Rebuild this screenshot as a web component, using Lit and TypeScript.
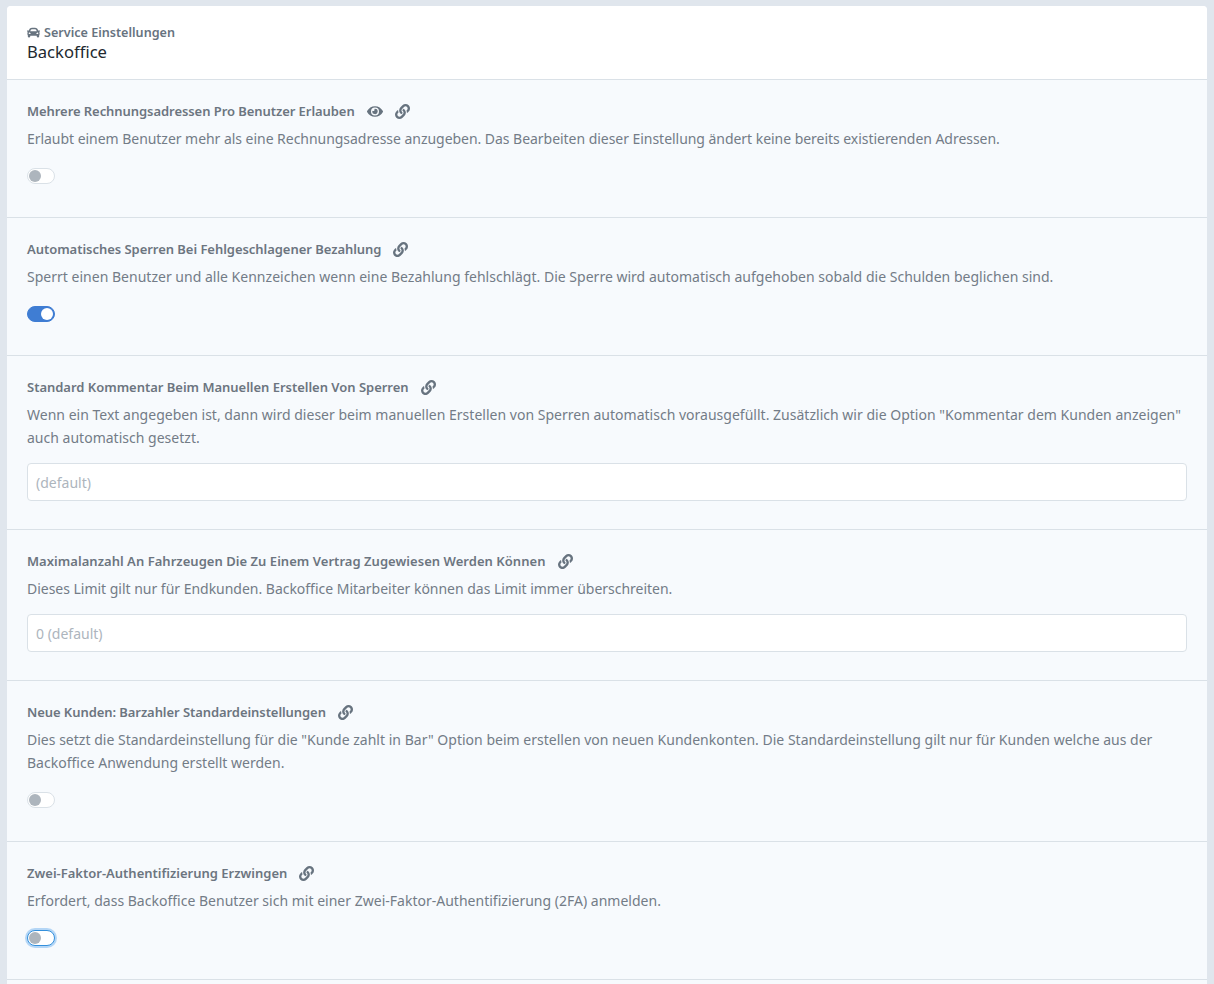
import { LitElement, html, css, svg } from "lit";
import { customElement } from "lit/decorators.js";

const LINK = svg`<path d="M326.612 185.391c59.747 59.809 58.927 155.698.36 214.59-.11.12-.24.25-.36.37l-67.2 67.2c-59.27 59.27-155.699 59.262-214.96 0-59.27-59.26-59.27-155.7 0-214.96l37.106-37.106c9.84-9.84 26.786-3.3 27.294 10.606.648 17.722 3.826 35.527 9.69 52.721 1.986 5.822.567 12.262-3.783 16.612l-13.087 13.087c-28.026 28.026-28.905 73.66-1.155 101.96 28.024 28.579 74.086 28.749 102.325.51l67.2-67.19c28.191-28.191 28.073-73.757 0-101.83-3.701-3.694-7.429-6.564-10.341-8.569a16.037 16.037 0 0 1-6.947-12.606c-.396-10.567 3.348-21.456 11.698-29.806l21.054-21.055c5.521-5.521 14.182-6.199 20.584-1.731a152.482 152.482 0 0 1 20.522 17.197zM467.547 44.449c-59.261-59.262-155.69-59.27-214.96 0l-67.2 67.2c-.12.12-.25.25-.36.37-58.566 58.892-59.387 154.781.36 214.59a152.454 152.454 0 0 0 20.521 17.196c6.402 4.468 15.064 3.789 20.584-1.731l21.054-21.055c8.35-8.35 12.094-19.239 11.698-29.806a16.037 16.037 0 0 0-6.947-12.606c-2.912-2.005-6.64-4.875-10.341-8.569-28.073-28.073-28.191-73.639 0-101.83l67.2-67.19c28.239-28.239 74.3-28.069 102.325.51 27.75 28.3 26.872 73.934-1.155 101.96l-13.087 13.087c-4.35 4.35-5.769 10.79-3.783 16.612 5.864 17.194 9.042 34.999 9.69 52.721.509 13.906 17.454 20.446 27.294 10.606l37.106-37.106c59.271-59.259 59.271-155.699.001-214.959z"/>`;
const EYE = svg`<path d="M572.52 241.4C518.29 135.59 410.93 64 288 64S57.68 135.64 3.48 241.41a32.35 32.35 0 0 0 0 29.19C57.71 376.41 165.07 448 288 448s230.32-71.64 284.52-177.41a32.35 32.35 0 0 0 0-29.19zM288 400a144 144 0 1 1 144-144 143.93 143.93 0 0 1-144 144zm0-240a95.31 95.31 0 0 0-25.31 3.79 47.85 47.85 0 0 1-66.9 66.9A95.78 95.78 0 1 0 288 160z"/>`;
const CAR = svg`<path d="M499.99 176h-59.87l-16.64-41.6C406.38 91.63 365.57 64 319.5 64h-127c-46.06 0-86.88 27.63-103.99 70.4L71.87 176H12.01C4.2 176-1.53 183.34.37 190.91l6 24C7.7 220.25 12.5 224 18.01 224h20.07C24.65 235.73 16 252.78 16 272v48c0 16.12 6.16 30.67 16 41.93V416c0 17.67 14.33 32 32 32h32c17.67 0 32-14.33 32-32v-32h256v32c0 17.67 14.33 32 32 32h32c17.67 0 32-14.33 32-32v-54.07c9.84-11.25 16-25.8 16-41.93v-48c0-19.22-8.65-36.27-22.07-48H494c5.51 0 10.31-3.75 11.64-9.09l6-24c1.89-7.57-3.84-14.91-11.65-14.91zm-352.06-17.83c7.29-18.22 24.94-30.17 44.57-30.17h127c19.63 0 37.28 11.95 44.57 30.17L384 208H128l19.93-49.83zM96 319.8c-19.2 0-32-12.76-32-31.9S76.8 256 96 256s48 28.71 48 47.85-28.8 15.95-48 15.95zm320 0c-19.2 0-48 3.19-48-15.95S396.8 256 416 256s32 12.76 32 31.9-12.8 31.9-32 31.9z"/>`;

type Item = {
  title: string;
  desc: string;
  eye?: boolean;
  toggle?: "off" | "on" | "focus";
  placeholder?: string;
  titleTrack: number;
  descTrack: number;
};

const ITEMS: Item[] = [
  { title: "Mehrere Rechnungsadressen Pro Benutzer Erlauben", eye: true, toggle: "off", titleTrack: -0.064, descTrack: -0.04,
    desc: "Erlaubt einem Benutzer mehr als eine Rechnungsadresse anzugeben. Das Bearbeiten dieser Einstellung ändert keine bereits existierenden Adressen." },
  { title: "Automatisches Sperren Bei Fehlgeschlagener Bezahlung", toggle: "on", titleTrack: -0.04, descTrack: 0.013,
    desc: "Sperrt einen Benutzer und alle Kennzeichen wenn eine Bezahlung fehlschlägt. Die Sperre wird automatisch aufgehoben sobald die Schulden beglichen sind." },
  { title: "Standard Kommentar Beim Manuellen Erstellen Von Sperren", placeholder: "(default)", titleTrack: -0.02, descTrack: 0.012,
    desc: 'Wenn ein Text angegeben ist, dann wird dieser beim manuellen Erstellen von Sperren automatisch vorausgefüllt. Zusätzlich wir die Option "Kommentar dem Kunden anzeigen" auch automatisch gesetzt.' },
  { title: "Maximalanzahl An Fahrzeugen Die Zu Einem Vertrag Zugewiesen Werden Können", placeholder: "0 (default)", titleTrack: 0.04, descTrack: -0.02,
    desc: "Dieses Limit gilt nur für Endkunden. Backoffice Mitarbeiter können das Limit immer überschreiten." },
  { title: "Neue Kunden: Barzahler Standardeinstellungen", toggle: "off", titleTrack: -0.07, descTrack: 0.012,
    desc: 'Dies setzt die Standardeinstellung für die "Kunde zahlt in Bar" Option beim erstellen von neuen Kundenkonten. Die Standardeinstellung gilt nur für Kunden welche aus der Backoffice Anwendung erstellt werden.' },
  { title: "Zwei-Faktor-Authentifizierung Erzwingen", toggle: "focus", titleTrack: 0, descTrack: 0.01,
    desc: "Erfordert, dass Backoffice Benutzer sich mit einer Zwei-Faktor-Authentifizierung (2FA) anmelden." },
];

@customElement("app-root")
export class AppRoot extends LitElement {
  static styles = css`
    :host {
      display: block;
      height: 100vh;
      overflow: hidden;
      box-sizing: border-box;
      padding: 6px 7px 0;
      background: #e0e6ed;
      font-family: "Noto Sans", "Open Sans", sans-serif;
    }
    .card {
      background: #f7fafd;
      border-radius: 4px 4px 0 0;
    }
    .head {
      background: #fff;
      border-radius: 4px 4px 0 0;
      padding: 18px 20px 16px;
      height: 39px;
      border-bottom: 1px solid #dae1e7;
    }
    .crumb {
      display: flex;
      align-items: center;
      gap: 4px;
      height: 17px;
      font-size: 12.6px;
      font-weight: 600;
      color: #67737f;
    }
    .crumb svg { width: 13px; height: 13px; fill: #67737f; }
    .name {
      font-size: 16.6px;
      line-height: 22px;
      color: #22292f;
    }
    .item {
      padding: 22px 20px 0;
      border-bottom: 1px solid #dae1e7;
    }
    .title {
      display: flex;
      align-items: center;
      height: 18px;
      font-size: 13px;
      font-weight: 600;
      color: #6c7580;
    }
    .icons { display: flex; align-items: center; gap: 12px; margin-left: 12px; }
    .icons svg { height: 15px; fill: #67737f; display: block; }
    .icons .eye { width: 16px; }
    .icons .link { width: 15px; }
    .desc {
      margin: 7px 0 0;
      font-size: 14px;
      line-height: 23px;
      color: #737c87;
    }
    .toggle {
      box-sizing: border-box;
      width: 28px;
      height: 16px;
      margin: 18px 0 33px;
      border: 1px solid #dae1e7;
      border-radius: 8px;
      background: #fff;
      display: flex;
      align-items: center;
      padding: 0 1px;
    }
    .toggle i {
      width: 12px;
      height: 12px;
      border-radius: 50%;
      background: #adb5bd;
    }
    .toggle.on { background: #3f7dd3; border-color: #3f7dd3; justify-content: flex-end; }
    .toggle.on i { background: #fff; }
    .toggle.focus { border-color: #3490dc; box-shadow: 0 0 0 2px #b4d6f6; }
    .input {
      box-sizing: border-box;
      display: block;
      width: 100%;
      height: 38px;
      margin: 14px 0 28px;
      padding: 0 8px;
      border: 1px solid #dae1e7;
      border-radius: 4px;
      background: #fff;
      font: inherit;
      font-size: 14px;
      color: #495057;
      outline: none;
    }
    .input::placeholder { color: #adb5bd; opacity: 1; }
    .tail { height: 40px; }
  `;

  private row(it: Item) {
    return html`<section class="item">
      <div class="title">
        <span style="letter-spacing:${it.titleTrack}px">${it.title}</span>
        <span class="icons">
          ${it.eye ? html`<svg class="eye" viewBox="0 0 576 512">${EYE}</svg>` : ""}
          <svg class="link" viewBox="0 0 512 512">${LINK}</svg>
        </span>
      </div>
      <p class="desc" style="letter-spacing:${it.descTrack}px">${it.desc}</p>
      ${it.toggle
        ? html`<div class="toggle ${it.toggle}"><i></i></div>`
        : html`<input class="input" placeholder=${it.placeholder ?? ""} />`}
    </section>`;
  }

  render() {
    return html`<div class="card">
      <header class="head">
        <div class="crumb"><svg viewBox="0 0 512 512">${CAR}</svg><span>Service Einstellungen</span></div>
        <div class="name">Backoffice</div>
      </header>
      ${ITEMS.map((i) => this.row(i))}
      <div class="tail"></div>
    </div>`;
  }
}
